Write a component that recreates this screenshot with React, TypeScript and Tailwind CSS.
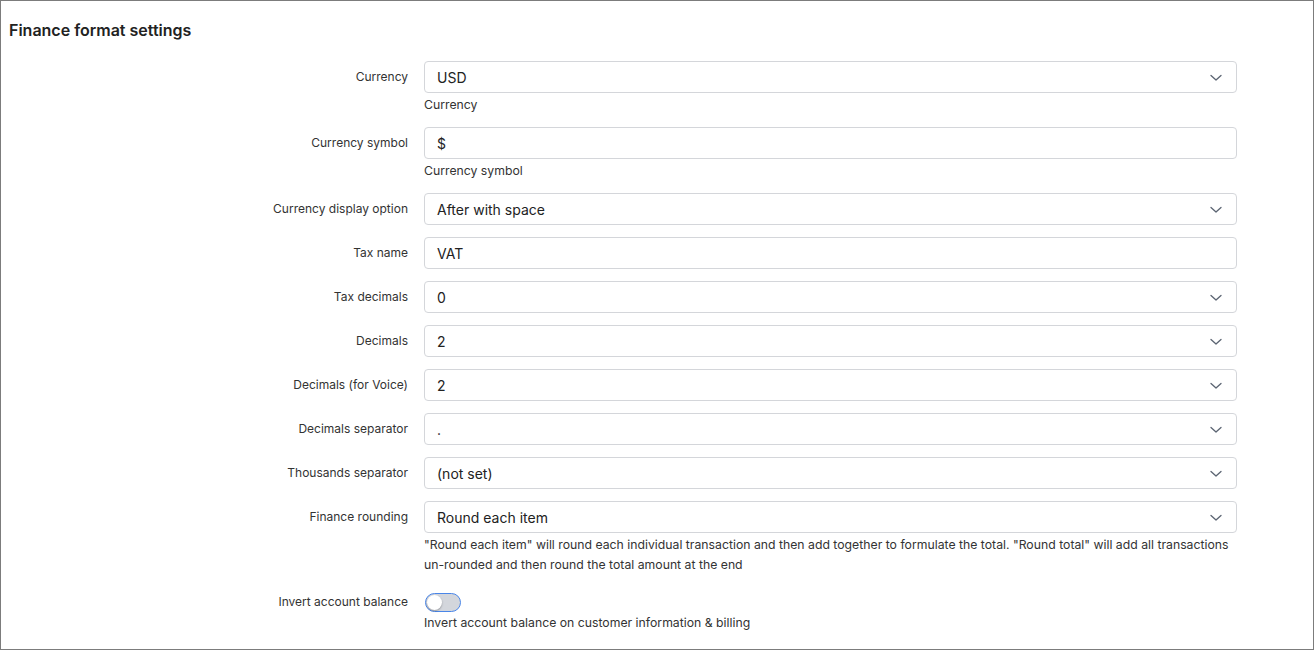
import React from "react";

type Row = {
  label: string;
  value: string;
  select?: boolean;
  help?: string[];
};

const rows: Row[] = [
  { label: "Currency", value: "USD", select: true, help: ["Currency"] },
  { label: "Currency symbol", value: "$", help: ["Currency symbol"] },
  { label: "Currency display option", value: "After with space", select: true },
  { label: "Tax name", value: "VAT" },
  { label: "Tax decimals", value: "0", select: true },
  { label: "Decimals", value: "2", select: true },
  { label: "Decimals (for Voice)", value: "2", select: true },
  { label: "Decimals separator", value: ".", select: true },
  { label: "Thousands separator", value: "(not set)", select: true },
  {
    label: "Finance rounding",
    value: "Round each item",
    select: true,
    help: [
      "\"Round each item\" will round each individual transaction and then add together to formulate the total. \"Round total\" will add all transactions",
      "un-rounded and then round the total amount at the end",
    ],
  },
];

function Chevron() {
  return (
    <svg width="12" height="8" viewBox="0 0 12 8" fill="none" className="absolute right-[14px] top-[12px]">
      <path d="M1 1.5l5 4.5 5-4.5" stroke="#5b6472" strokeWidth="1.3" strokeLinecap="round" strokeLinejoin="round" />
    </svg>
  );
}

function Field({ row }: { row: Row }) {
  return (
    <div className="flex">
      <div className="w-[407px] pt-[7px] text-right text-[12px] leading-[18px] text-[#333]">{row.label}</div>
      <div className="ml-4 w-[813px]">
        <div className="relative flex h-8 items-center rounded-[4px] border border-[#d4d6da] bg-white pl-[12px] text-[14px] text-[#222]">
          {row.value}
          {row.select && <Chevron />}
        </div>
        {row.help && (
          <div className="mt-[2px] whitespace-nowrap text-[12.25px] leading-[20px] text-[#333]">
            {row.help.map((line) => (
              <div key={line}>{line}</div>
            ))}
          </div>
        )}
      </div>
    </div>
  );
}

export default function App() {
  return (
    <div
      className="h-[650px] w-[1314px] overflow-hidden border border-[#7c7c7c] bg-white"
      style={{ fontFamily: "Inter, 'Noto Sans', sans-serif" }}
    >
      <h1 className="pl-[8px] pt-[19px] text-[16px] font-semibold leading-[20px] text-[#222]">Finance format settings</h1>
      <div className="mt-[21px] flex flex-col gap-3">
        {rows.map((row) => (
          <Field key={row.label} row={row} />
        ))}
        <div className="mt-[6px] flex">
          <div className="w-[407px] text-right text-[12px] leading-[18px] text-[#333]">Invert account balance</div>
          <div className="ml-4 w-[813px]">
            <div className="relative ml-[1px] h-[19px] w-[36px] rounded-full border border-[#4a86e8] bg-[#d3d6dc]">
              <div className="absolute left-[1px] top-[1px] h-[15px] w-[15px] rounded-full bg-white shadow-[0_1px_2px_rgba(0,0,0,0.3)]" />
            </div>
            <div className="mt-[1px] text-[12.25px] leading-[20px] text-[#333]">
              Invert account balance on customer information &amp; billing
            </div>
          </div>
        </div>
      </div>
    </div>
  );
}
